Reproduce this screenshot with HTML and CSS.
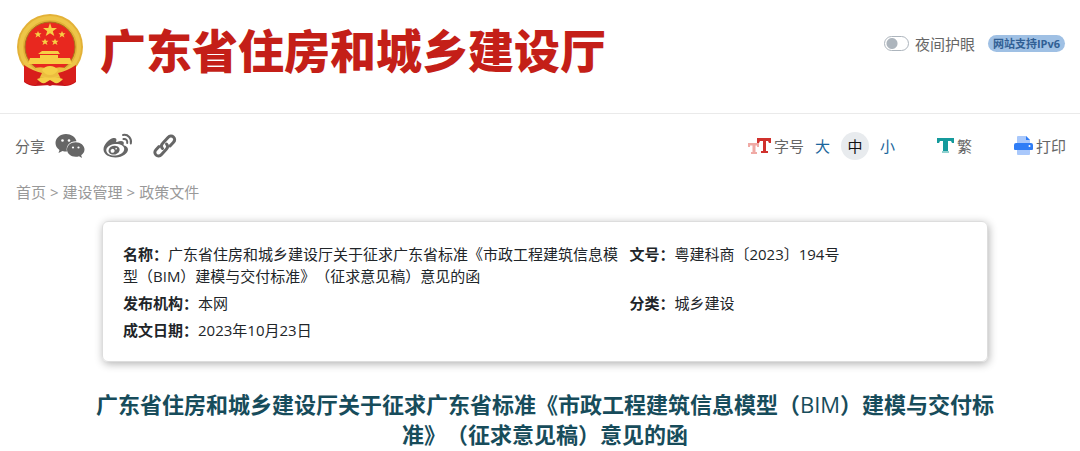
FILE: index.html
```
<!DOCTYPE html>
<html lang="zh-CN">
<head>
	<meta charset="UTF-8">
	<meta name="viewport" content="width=device-width, initial-scale=1">
	<title>广东省住房和城乡建设厅</title>
	<link rel="stylesheet" href="styles.css">
</head>

<body>
	<header class="header">
		<a class="brand" href="#">
			<svg class="emblem" viewBox="0 0 68 74" aria-hidden="true">
				<path fill="#c8141a" d="M9 51 L8 69 Q13 73 19 73 L34 72 L49 73 Q55 73 60 69 L59 51 Z"/>
				<ellipse cx="34" cy="34" rx="33" ry="33" fill="#e3b137"/>
				<ellipse cx="34" cy="34" rx="29" ry="29" fill="none" stroke="#edc548" stroke-width="4"/>
				<circle cx="34" cy="34" r="25" fill="#e8281f" stroke="#a8721c" stroke-width="1"/>
				<g fill="#f7cf45">
					<path d="M34 10 L35.700 15 L41 15 L36.800 18.200 L38.300 23 L34 20.200 L29.700 23 L31.200 18.200 L27 15 L32.300 15 Z"/>
					<path d="M22 18l1 2.300h2.500l-2 1.700 1 2.500-2.500-1.500-2.500 1.500 1-2.500-2-1.700h2.500z M46 18l1 2.300h2.500l-2 1.700 1 2.500-2.500-1.500-2.500 1.500 1-2.500-2-1.700h2.500z M29 25.500l1 2.300h2.500l-2 1.700 1 2.500-2.500-1.500-2.500 1.500 1-2.500-2-1.700h2.500z M39 25.500l1 2.300h2.500l-2 1.700 1 2.500-2.500-1.500-2.500 1.500 1-2.500-2-1.700h2.500z"/>
					<path d="M26 38h16l2 3h-2v4h12l2 6H12l2-6h10v-4h-2z"/>
				</g>
				<path fill="#e8281f" d="M24 41h20v1H24z"/>
				<path fill="#ecbe3f" d="M19 55q9-2 15 2 6-4 15-2l-4 6q-5 4-11 3-6 1-11-3z"/>
				<path fill="#d81e1b" d="M8 52q9 6 18 8l-6 12q-7 0-12-4z M60 52q-9 6-18 8l6 12q7 0 12-4z"/>
				<path fill="#f5cf48" d="M26 57q3-4 8-4t8 4q-3 5-8 5t-8-5z M21 66q7-3 13-1 6-2 13 1-4 5-8 4l-5-3-5 3q-4 1-8-4z"/>
				<path fill="#c8141a" d="M29 71l5-3 5 3-5 2z"/>
			</svg>
			<span class="brand-name">广东省住房和城乡建设厅</span>
		</a>
		<div class="header-tools">
			<label class="night"><input class="switch" type="checkbox">夜间护眼</label>
			<span class="badge">网站支持IPv6</span>
		</div>
	</header>

	<main>
		<div class="toolbar">
			<div class="share">
				<span>分享</span>
				<a href="#" aria-label="微信">
					<svg width="30" height="26" viewBox="0 0 30 26">
						<path fill="#666" d="M11 1C5 1 .5 5 .5 10c0 3 1.500 5.300 4 7L3.500 20l4-2q2 .6 4.500.5C10.500 12.500 15 8 21.500 8.200 20.500 4 16 1 11 1z"/>
						<path fill="#666" d="M20.700 9.300c-5 0-8.700 3.200-8.700 7.200s3.700 7.200 8.700 7.200q1.800 0 3.300-.5l3 1.800-.8-2.800c2-1.400 3.300-3.400 3.300-5.700 0-4-4-7.200-8.800-7.200z"/>
						<g fill="#fff"><circle cx="7.500" cy="7.500" r="1.300"/><circle cx="14" cy="7.500" r="1.300"/><circle cx="18" cy="14.500" r="1.100"/><circle cx="23.500" cy="14.500" r="1.100"/></g>
					</svg>
				</a>
				<a href="#" aria-label="微博">
					<svg width="30" height="26" viewBox="0 0 30 26">
						<path fill="#666" fill-rule="evenodd" d="M21.300 12.500c-1-.3-.8-.7-.5-2 .5-2.500-2.500-3.500-7-1.500-.8.300-.7-.2-.5-1 .7-2.300-.6-3.500-3-3C6 6 .5 11.500.5 16.500c0 5 6 8 12 8 7.500 0 12.500-4.300 12.500-7.900 0-2.200-1.800-3.500-3.700-4.100zM12.500 22.500c-5 .4-9-1.700-9.200-5-.2-3 3.500-6 8.500-6.500s9.200 1.500 9.400 4.800-3.700 6.300-8.700 6.700z"/>
						<path fill="#666" fill-rule="evenodd" d="M13 13c-3.200-.7-6.600 1-7.300 3.800-.8 2.600 1.300 4.600 4.300 4.800 3 .1 5.700-1.400 6.500-3.900.7-2.300-.8-4.200-3.500-4.700zM9.500 19.800a2 2 0 1 1 1.300-3.600 2 2 0 0 1-1.300 3.600zM13.400 16.500a.8.8 0 1 1 .1-1.500.8.800 0 0 1-.1 1.500z"/>
						<path fill="none" stroke="#666" stroke-width="2" stroke-linecap="round" d="M20 2c5-1 9 3.500 7.800 8.500M20.500 6c2.500-.4 4.200 1.500 3.700 4"/>
					</svg>
				</a>
				<a href="#" aria-label="复制链接">
					<svg width="24" height="26" viewBox="0 0 24 26" fill="none" stroke="#666" stroke-width="3" stroke-linecap="round">
						<path d="M9.500 15.500c-1.700-1.700-1.300-3.700 0-5l5.500-6c1.700-1.900 4-1.900 5.500-.5 1.600 1.500 1.500 3.700 0 5.300L17 13"/>
						<path d="M13.500 11c1.700 1.700 1.300 3.700 0 5L8.500 21.500c-1.700 1.900-4 1.900-5.500.5-1.600-1.500-1.500-3.700 0-5.300L6 13.500"/>
					</svg>
				</a>
			</div>
			<div class="page-tools">
				<div class="font-size">
					<svg width="24" height="18" viewBox="0 0 24 18">
						<path fill="#f0aaa5" d="M0 6h11v4H9V8.500H7.500V15H9v2H3v-2h1.500V8.500H2V10H0z"/>
						<path fill="#d0312d" d="M9 1h14v5h-2l-1-2h-2v10h2v2h-7v-2h2V4h-3l-1 2H9z"/>
					</svg>
					<span>字号</span>
					<button type="button">大</button>
					<button type="button" class="active">中</button>
					<button type="button">小</button>
				</div>
				<a class="tool" href="#">
					<svg width="17" height="18" viewBox="0 0 17 18">
						<path fill="#159a9c" d="M0 1h17v5h-2l-1-2h-3v10H6V4H3L2 6H0z"/>
						<path fill="#8fd0cf" d="M5 14h7v2H5z"/>
					</svg>
					繁
				</a>
				<a class="tool" href="#">
					<svg width="19" height="20" viewBox="0 0 19 20">
						<path fill="#a9c8fb" d="M4 0h8l4 4v14q0 1-1 1H4q-1 0-1-1V1q0-1 1-1z"/>
						<path fill="#2f7df6" d="M12 0v4h4zM2 7h15q2 0 2 2v4q0 1-1 1H1q-1 0-1-1V9q0-2 2-2z"/>
						<circle cx="15.500" cy="10" r="1" fill="#fff"/>
					</svg>
					打印
				</a>
			</div>
		</div>

		<nav class="crumbs">
			<a href="#">首页</a><span>&gt;</span><a href="#">建设管理</a><span>&gt;</span><a href="#">政策文件</a>
		</nav>

		<article>
			<dl class="info">
				<div><dt>名称：</dt><dd>广东省住房和城乡建设厅关于征求广东省标准《市政工程建筑信息模型（BIM）建模与交付标准》（征求意见稿）意见的函</dd></div>
				<div><dt>文号：</dt><dd>粤建科商〔2023〕194号</dd></div>
				<div><dt>发布机构：</dt><dd>本网</dd></div>
				<div><dt>分类：</dt><dd>城乡建设</dd></div>
				<div><dt>成文日期：</dt><dd>2023年10月23日</dd></div>
			</dl>

			<h1 class="title">广东省住房和城乡建设厅关于征求广东省标准《市政工程建筑信息模型（<span>BIM</span>）建模与交付标准》（征求意见稿）意见的函</h1>
		</article>
	</main>
</body>
</html>
```
FILE: styles.css
```
* {
	box-sizing: border-box;
}
body {
	margin: 0;
	background: #fff;
	color: #666;
	font: 15px/22px "Open Sans", "Noto Sans CJK SC", sans-serif;
	text-spacing-trim: space-all;
}
a {
	color: inherit;
	text-decoration: none;
}
svg {
	display: block;
	flex: none;
}
button {
	height: 28px;
	padding: 0;
	border: 0;
	background: none;
	color: #1a659c;
	font: inherit;
	cursor: pointer;
}
button.active {
	width: 28px;
	border-radius: 50%;
	background: #e8ebee;
	color: #111;
}

/* header */
.header {
	display: flex;
	align-items: center;
	justify-content: space-between;
	height: 114px;
	padding: 0 15px 14px 16px;
	border-bottom: 1px solid #eaeaea;
}
.brand {
	display: flex;
	align-items: center;
	gap: 16px;
}
.emblem {
	width: 68px;
	height: 74px;
}
.brand-name {
	color: #c41f18;
	font-size: 46px;
	font-weight: 900;
	line-height: 60px;
	white-space: nowrap;
}
.header-tools, .night {
	display: flex;
	align-items: center;
}
.header-tools {
	gap: 13px;
	padding-bottom: 12px;
}
.night {
	gap: 6px;
}
.switch {
	appearance: none;
	width: 25px;
	height: 15px;
	margin: 0;
	border: 1px solid #adb5bd;
	border-radius: 8px;
	background: radial-gradient(circle at 7px 50%, #adb5bd 5px, transparent 6px);
}
.switch:checked {
	background: radial-gradient(circle at 16px 50%, #0d6efd 5px, transparent 6px);
}
.badge {
	padding: 0 5px;
	border-radius: 9px;
	background: #9fc0e4;
	color: #315f94;
	font-size: 11px;
	font-weight: bold;
	line-height: 17px;
}

/* share and page tools */
.toolbar {
	display: flex;
	align-items: center;
	justify-content: space-between;
	padding: 18px 14px 0 15px;
}
.share, .page-tools, .font-size, .tool {
	display: flex;
	align-items: center;
}
.share {
	gap: 18px;
}
.share span {
	margin-right: -8px;
}
.share a:last-child {
	margin-left: 2px;
}
.page-tools {
	gap: 42px;
}
.font-size {
	gap: 11px;
}
.font-size span {
	margin-left: -9px;
}
.tool {
	gap: 3px;
}

.crumbs {
	display: flex;
	gap: 4px;
	padding: 21px 16px 0;
	color: #999;
}

article {
	padding-left: 10px;
}

/* document info */
.info {
	display: grid;
	grid-template-columns: 3fr 2fr;
	row-gap: 5px;
	max-width: 886px;
	margin: 18px auto 0;
	padding: 21px 20px 20px;
	border: 1px solid #ddd;
	border-radius: 6px;
	box-shadow: 1px 2px 8px rgba(0, 0, 0, .3);
	color: #212529;
}
.info div {
	padding-right: 8px;
}
.info dt, .info dd {
	display: inline;
	margin: 0;
}
.info dt {
	font-weight: bold;
}

.title {
	max-width: 904px;
	margin: 27px auto 0;
	color: #174c5b;
	font-size: 22px;
	font-weight: bold;
	line-height: 30px;
	text-align: center;
}
.title span {
	font-weight: normal;
}
```
